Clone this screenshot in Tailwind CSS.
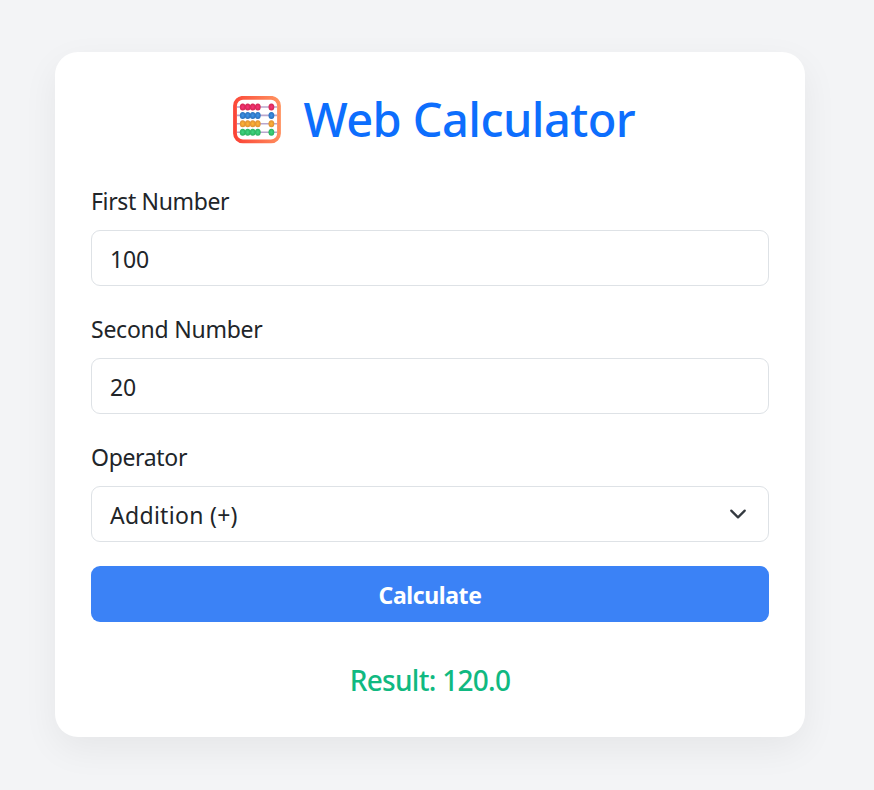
<!DOCTYPE html>
<html lang="en">
<head>
<meta charset="utf-8">
<title>Web Calculator</title>
<script src="https://cdn.jsdelivr.net/npm/@tailwindcss/browser@4"></script>
</head>
<body class="min-h-screen bg-[#f3f4f6] pt-[52px] pl-[55px] font-['Segoe_UI','Noto_Sans',sans-serif] text-[#212529]">
<main class="flex h-[685px] w-[750px] flex-col rounded-[23px] bg-white px-9 pt-9 shadow-[0_12px_36px_rgba(0,0,0,0.06)]">
  <h1 class="flex h-[58px] items-center justify-center pl-2 text-[47px] leading-[58px] font-medium text-[#0d6efd]">
    <svg class="mt-[5px] mr-[23px] h-12 w-12 shrink-0" viewBox="0 0 48 48" fill="none" aria-hidden="true">
      <defs>
        <linearGradient id="frame" x1="0" y1="24" x2="48" y2="18" gradientUnits="userSpaceOnUse"><stop stop-color="#fb4336"/><stop offset="1" stop-color="#ff9360"/></linearGradient>
        <radialGradient id="red"><stop stop-color="#f9347b"/><stop offset="1" stop-color="#d22650"/></radialGradient>
        <radialGradient id="blue"><stop stop-color="#3e93e7"/><stop offset="1" stop-color="#2870bd"/></radialGradient>
        <radialGradient id="gold"><stop stop-color="#ffb637"/><stop offset="1" stop-color="#df8e32"/></radialGradient>
        <radialGradient id="green"><stop stop-color="#41d681"/><stop offset="1" stop-color="#2bb25f"/></radialGradient>
      </defs>
      <path d="M4 11H44M4 19.4H44M4 27.8H44M4 36.2H44" stroke="#b9a6cd" stroke-width="1.6"/>
      <rect x="2" y="1.8" width="44" height="43.6" rx="8" stroke="url(#frame)" stroke-width="3.8"/>
      <g fill="url(#red)"><ellipse cx="9.7" cy="11" rx="2.9" ry="3.5"/><ellipse cx="14.7" cy="11" rx="2.9" ry="3.5"/><ellipse cx="19.7" cy="11" rx="2.9" ry="3.5"/><ellipse cx="24.8" cy="11" rx="2.9" ry="3.5"/><ellipse cx="38.4" cy="11" rx="2.9" ry="3.5"/></g>
      <g fill="url(#blue)"><ellipse cx="9.7" cy="19.4" rx="2.9" ry="3.5"/><ellipse cx="14.7" cy="19.4" rx="2.9" ry="3.5"/><ellipse cx="19.7" cy="19.4" rx="2.9" ry="3.5"/><ellipse cx="24.8" cy="19.4" rx="2.9" ry="3.5"/><ellipse cx="38.4" cy="19.4" rx="2.9" ry="3.5"/></g>
      <g fill="url(#gold)"><ellipse cx="9.7" cy="27.8" rx="2.9" ry="3.5"/><ellipse cx="14.7" cy="27.8" rx="2.9" ry="3.5"/><ellipse cx="19.7" cy="27.8" rx="2.9" ry="3.5"/><ellipse cx="24.8" cy="27.8" rx="2.9" ry="3.5"/><ellipse cx="38.4" cy="27.8" rx="2.9" ry="3.5"/></g>
      <g fill="url(#green)"><ellipse cx="9.7" cy="36.2" rx="2.9" ry="3.5"/><ellipse cx="14.7" cy="36.2" rx="2.9" ry="3.5"/><ellipse cx="19.7" cy="36.2" rx="2.9" ry="3.5"/><ellipse cx="24.8" cy="36.2" rx="2.9" ry="3.5"/><ellipse cx="38.4" cy="36.2" rx="2.9" ry="3.5"/></g>
    </svg>
    <span class="w-[332px] pt-1 whitespace-nowrap tracking-[-0.58px]">Web Calculator</span>
  </h1>
  <form class="mt-9 flex flex-col">
    <label for="first" class="h-9 pt-px text-[23px] leading-9 tracking-[-0.36px]">First Number</label>
    <input id="first" value="100" class="mt-3 h-14 rounded-[9px] border border-[#dee2e6] bg-white px-[18px] pt-px text-[23px] tracking-[-0.2px]">
    <label for="second" class="mt-6 h-9 pt-px text-[23px] leading-9 tracking-[-0.24px]">Second Number</label>
    <input id="second" value="20" class="mt-3 h-14 rounded-[9px] border border-[#dee2e6] bg-white px-[18px] pt-px text-[23px] tracking-[-0.2px]">
    <label for="operator" class="mt-6 h-9 pt-px text-[23px] leading-9 tracking-[-0.33px]">Operator</label>
    <div id="operator" class="mt-3 flex h-14 items-center justify-between rounded-[9px] border border-[#dee2e6] pr-[21px] pl-[18px] text-[23px]">
      <span class="pt-[3px] tracking-[0.3px]">Addition (+)</span>
      <svg class="h-[18px] w-[18px]" viewBox="0 0 16 16" fill="none" aria-hidden="true"><path d="m2 5 6 6 6-6" stroke="#343a40" stroke-width="2" stroke-linecap="round" stroke-linejoin="round"/></svg>
    </div>
    <button type="button" class="mt-6 h-14 rounded-[9px] bg-[#3b82f6] pt-[3px] text-[23px] font-bold tracking-[-0.4px] text-white">Calculate</button>
  </form>
  <p class="mt-9 text-center text-[28px] leading-[45px] font-medium tracking-[-0.7px] text-[#10b981]">Result: 120.0</p>
</main>
</body>
</html>
